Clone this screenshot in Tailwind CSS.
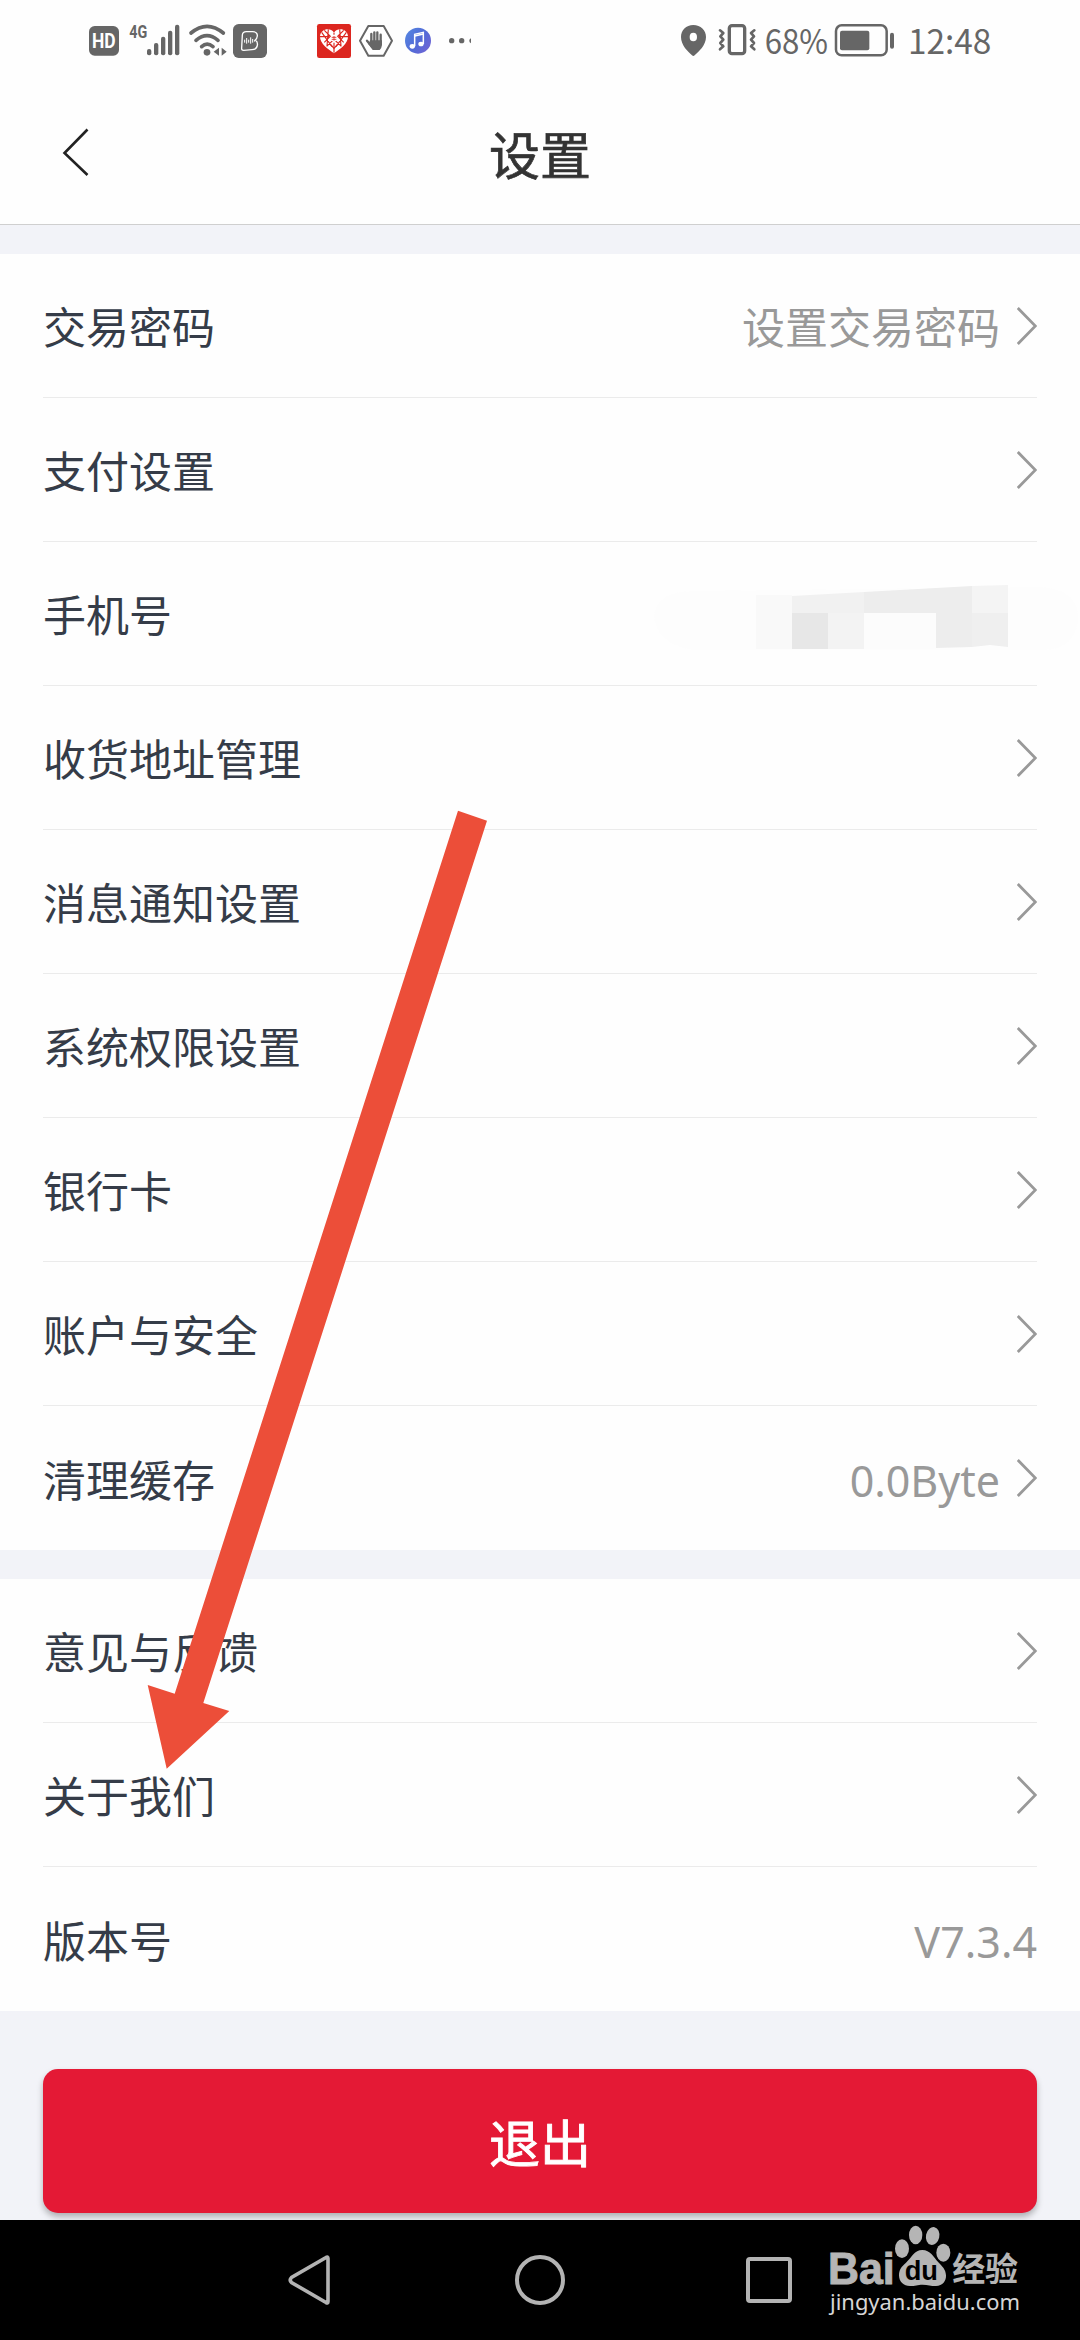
<!DOCTYPE html>
<html lang="zh-CN">
<head>
<meta charset="utf-8">
<title>设置</title>
<script src="https://cdn.jsdelivr.net/npm/@tailwindcss/browser@4"></script>
</head>
<body class="bg-[#f2f3f8] font-['Noto_Sans_CJK_SC',sans-serif]">
<svg class="hidden">
  <symbol id="chev" viewBox="0 0 20 38"><path d="M0.8 1 L18.4 19 L0.8 37" fill="none" stroke="#999" stroke-width="2.800"/></symbol>
</svg>
<div class="relative flex h-[2340px] w-[1080px] flex-col overflow-hidden">

  <!-- Status bar -->
  <div class="flex h-20 justify-between bg-[#fefefe] pr-[60px] pl-[70px]">
    <svg class="h-20 w-[420px]" viewBox="0 0 1260 240" fill="#666">
      <rect x="57" y="78" width="90" height="89" rx="17"/>
      <text x="66" y="144" font-family="Roboto" font-weight="700" font-size="60" fill="#fff" textLength="71" lengthAdjust="spacingAndGlyphs">HD</text>
      <text x="178" y="114" font-family="Roboto" font-weight="700" font-size="55" textLength="54" lengthAdjust="spacingAndGlyphs">4G</text>
      <rect x="231" y="147" width="13" height="19" rx="6"/><rect x="252" y="129" width="13" height="37" rx="6"/><rect x="273" y="110" width="13" height="56" rx="6"/><rect x="294" y="92" width="13" height="74" rx="6"/><rect x="315" y="74" width="13" height="92" rx="6"/>
      <g fill="none" stroke="#666" stroke-width="11" stroke-linecap="round"><path d="M363 99 Q411 59 460 99"/><path d="M378 121 Q411 93 444 121"/><path d="M395 140 Q411 125 429 140"/></g>
      <circle cx="411" cy="157" r="10"/>
      <path d="M447 143V167L431 155ZM455 143V167L470 155Z"/>
      <rect x="489" y="72" width="102" height="102" rx="17"/>
      <path d="M517 105 Q518 95 529 95 L548 95 Q563 96 562 108 Q561 116 556 120 Q564 125 562 136 Q560 149 546 149 L521 151 Q514 151 515 144 Z" fill="none" stroke="#fff" stroke-width="4"/>
      <path d="M524 119v9M530 114v17M536 119v9M542 112v19M548 117v11M554 120v5" stroke="#fff" stroke-width="3"/>
      <rect x="741" y="72" width="102" height="102" rx="7" fill="#dc261f"/>
      <path d="M792 98 C780 80 751 88 750 109 C749 132 776 148 792 160 C808 148 835 132 834 109 C833 88 804 80 792 98Z" fill="#fff"/>
      <g stroke="#dc261f" stroke-width="3.4" fill="none"><path d="M763 91L781 109 763 127M821 91L803 109 821 127M750 110H778M806 110H834M770 139L792 118 814 139M792 98V104M792 128V158M775 88L771 138M809 88L813 138M755 97L786 140M829 97L798 140"/><path d="M782 134L792 145 802 134" stroke-width="4"/></g>
      <circle cx="792" cy="115" r="10" fill="#fff"/><path d="M785 112h14M785 118h14M792 108v14" stroke="#dc261f" stroke-width="2.5"/>
      <path d="M895 78H941L966 122 941 167H895L870 122Z" fill="#fff" stroke="#666" stroke-width="6" stroke-linejoin="round"/>
      <g stroke="#666" stroke-width="7" stroke-linecap="round"><path d="M904 102V130M913 97V130M922 97V130M932 104V130M891 122L904 138"/></g>
      <path d="M900 121H936V135Q935 144 929 150H908Q903 144 896 133Z"/>
      <defs><linearGradient id="mg" x1="0" y1="0" x2="1" y2="0.7"><stop offset="0" stop-color="#5589e2"/><stop offset=".6" stop-color="#536bd7"/><stop offset="1" stop-color="#6d65d5"/></linearGradient></defs>
      <circle cx="1044" cy="122" r="39" fill="url(#mg)"/>
      <path d="M1034 139V103L1060 97V132" fill="none" stroke="#fff" stroke-width="4.5"/><path d="M1034 108L1060 102" stroke="#fff" stroke-width="5"/>
      <ellipse cx="1027" cy="139" rx="8" ry="7" fill="#fff"/><ellipse cx="1053" cy="132" rx="8" ry="7" fill="#fff"/>
      <circle cx="1145" cy="122" r="8"/><circle cx="1175" cy="122" r="8"/><path d="M1203 114.500A8 8 0 0 0 1203 129.500Z"/>
    </svg>
    <svg class="h-20 w-[360px]" viewBox="0 0 1080 240" fill="#666">
      <path fill-rule="evenodd" d="M100 75C78 75 63 91 63 111C63 136 84 155 96 166Q100 170 104 166C116 155 138 136 138 111C138 91 122 75 100 75ZM100 98A11 13 0 1 1 100 124A11 13 0 1 1 100 98Z"/>
      <rect x="208" y="77" width="46" height="84" rx="8" fill="none" stroke="#666" stroke-width="10"/>
      <path d="M180 91L190 99 181 109 190 119 181 129 190 139 180 148M283 91L273 99 282 109 273 119 282 129 273 139 283 148" fill="none" stroke="#666" stroke-width="8" stroke-linecap="round" stroke-linejoin="round"/>
      <text x="314" y="162" font-family="'Noto Sans CJK SC'" font-size="102" textLength="190" lengthAdjust="spacingAndGlyphs">68%</text>
      <rect x="528" y="76" width="152" height="90" rx="17" fill="none" stroke="#666" stroke-width="7.500"/>
      <rect x="540" y="92" width="88" height="59" rx="6"/>
      <rect x="690" y="98" width="12" height="48" rx="6"/>
      <text x="744" y="162" font-family="'Noto Sans CJK SC'" font-size="102" textLength="250" lengthAdjust="spacingAndGlyphs">12:48</text>
    </svg>
  </div>

  <!-- Title bar -->
  <header class="grid h-[145px] grid-cols-[1fr_auto_1fr] items-center border-b border-[#cfcfcf] bg-[#fefefe]">
    <svg class="ml-[62px] h-12 w-7" viewBox="0 0 28 48"><path d="M25.500 1.500 L2.500 25 L25.500 47" fill="none" stroke="#222" stroke-width="2.600"/></svg>
    <h1 class="pt-0.5 text-[51px] leading-[72px] text-[#333] [-webkit-text-stroke:0.7px_#333]">设置</h1>
  </header>

  <!-- Account settings -->
  <section class="mt-[29px] bg-[#fefefe] px-[43px] text-[43px] text-[#353c48]">
    <div class="flex h-36 items-center justify-between border-b border-[#ebebeb]"><span>交易密码</span><div class="flex items-center gap-[17px] text-[#999]"><span>设置交易密码</span><svg class="h-[38px] w-5"><use href="#chev"/></svg></div></div>
    <div class="flex h-36 items-center justify-between border-b border-[#ebebeb]"><span>支付设置</span><svg class="h-[38px] w-5"><use href="#chev"/></svg></div>
    <div class="flex h-36 items-center justify-between border-b border-[#ebebeb]"><span>手机号</span>
      <svg class="-mr-[43px] h-[72px] w-[430px]" viewBox="650 577 430 72">
        <path d="M654 615Q656 590 695 590L1040 586Q1080 588 1078 620 1074 650 1040 649L710 651Q656 648 654 615Z" fill="#fdfdfd"/>
        <path d="M756 594H792V648H756Z" fill="#f9f9f9"/>
        <path d="M792 595L864 591V612H792Z" fill="#f1f1f1"/>
        <path d="M864 591L972 585V646L936 647V612H864Z" fill="#ededed"/>
        <path d="M792 612H828V648H792Z" fill="#e7e7e7"/>
        <path d="M828 612H864V648H828Z" fill="#f3f3f3"/>
        <path d="M864 612H936V648H864Z" fill="#fcfcfc"/>
        <path d="M972 585L1008 584V612H972Z" fill="#f4f4f4"/>
        <path d="M972 612H1008V646L990 644 972 646Z" fill="#efefef"/>
      </svg></div>
    <div class="flex h-36 items-center justify-between border-b border-[#ebebeb]"><span>收货地址管理</span><svg class="h-[38px] w-5"><use href="#chev"/></svg></div>
    <div class="flex h-36 items-center justify-between border-b border-[#ebebeb]"><span>消息通知设置</span><svg class="h-[38px] w-5"><use href="#chev"/></svg></div>
    <div class="flex h-36 items-center justify-between border-b border-[#ebebeb]"><span>系统权限设置</span><svg class="h-[38px] w-5"><use href="#chev"/></svg></div>
    <div class="flex h-36 items-center justify-between border-b border-[#ebebeb]"><span>银行卡</span><svg class="h-[38px] w-5"><use href="#chev"/></svg></div>
    <div class="flex h-36 items-center justify-between border-b border-[#ebebeb]"><span>账户与安全</span><svg class="h-[38px] w-5"><use href="#chev"/></svg></div>
    <div class="flex h-36 items-center justify-between"><span>清理缓存</span><div class="flex items-center gap-[17px] text-[#999]"><span class="pt-1.5 font-['Noto_Sans'] text-[43px]">0.0Byte</span><svg class="h-[38px] w-5"><use href="#chev"/></svg></div></div>
  </section>

  <!-- About -->
  <section class="mt-[29px] bg-[#fefefe] px-[43px] text-[43px] text-[#353c48]">
    <div class="flex h-36 items-center justify-between border-b border-[#ebebeb]"><span>意见与反馈</span><svg class="h-[38px] w-5"><use href="#chev"/></svg></div>
    <div class="flex h-36 items-center justify-between border-b border-[#ebebeb]"><span>关于我们</span><svg class="h-[38px] w-5"><use href="#chev"/></svg></div>
    <div class="flex h-36 items-center justify-between"><span>版本号</span><span class="pt-1.5 font-['Noto_Sans'] text-[43px] text-[#999]">V7.3.4</span></div>
  </section>

  <div class="h-[209px] px-[43px] pt-[58px]">
    <button class="h-36 w-full rounded-[15px] bg-[#e41935] text-[51px] leading-[72px] text-white shadow-[0_4px_6px_rgba(0,0,0,0.28)] [-webkit-text-stroke:0.9px_white]">退出</button>
  </div>

  <!-- System navigation -->
  <nav class="relative flex h-[120px] items-center gap-[186px] bg-black pl-[288px]">
    <svg class="h-[52px] w-[42px]" viewBox="0 0 42 52"><path d="M40 4.500V47.500Q40 50 38 48.500L3.500 28.500Q1 26 3.500 23.500L38 3.500Q40 2 40 4.500Z" fill="none" stroke="#b3b3b3" stroke-width="3.600"/></svg>
    <svg class="-ml-px h-[50px] w-[50px]" viewBox="0 0 50 50"><circle cx="25" cy="25" r="23" fill="none" stroke="#b3b3b3" stroke-width="4"/></svg>
    <svg class="-ml-[5px] h-[46px] w-[46px]" viewBox="0 0 46 46"><rect x="2" y="2" width="42" height="42" rx="2" fill="none" stroke="#b3b3b3" stroke-width="4"/></svg>
    <svg class="absolute top-0 left-[820px] h-[110px] w-[210px]" viewBox="60 60 630 330" fill="#b5b5b5">
      <g font-family="Liberation Sans" font-weight="700">
        <text x="84" y="253" font-size="132" textLength="200" lengthAdjust="spacingAndGlyphs" stroke="#b5b5b5" stroke-width="3">Bai</text>
        <ellipse cx="306" cy="146" rx="21" ry="28"/><ellipse cx="347" cy="105" rx="20" ry="28"/><ellipse cx="398" cy="108" rx="20" ry="27" transform="rotate(12 398 108)"/><ellipse cx="430" cy="158" rx="21" ry="27"/>
        <path d="M367 150C343 150 336 172 318 188C304 200 297 210 297 226C297 246 311 258 330 258C346 258 352 254 368 254C384 254 392 258 408 258C428 258 439 243 438 226C437 208 427 200 415 187C400 170 391 150 367 150Z"/>
        <text x="314" y="240" font-size="82" fill="#000" textLength="100" lengthAdjust="spacingAndGlyphs">du</text>
      </g>
      <text x="457" y="244" font-family="'Noto Sans CJK SC'" font-weight="700" font-size="99" textLength="197">经验</text>
      <text x="90" y="330" font-family="Noto Sans" font-size="63" fill="#d6d6d6" textLength="570" lengthAdjust="spacingAndGlyphs">jingyan.baidu.com</text>
    </svg>
  </nav>

  <!-- Pointer arrow laid over the list -->
  <svg class="absolute top-0 left-0 h-[2340px] w-[1080px]" viewBox="0 0 1080 2340"><path d="M458 810.700L487 820.700 203.300 1703 229.300 1711 166.700 1768.700 147.700 1685 174.700 1693.700Z" fill="#ec4e39"/></svg>
</div>
</body>
</html>
